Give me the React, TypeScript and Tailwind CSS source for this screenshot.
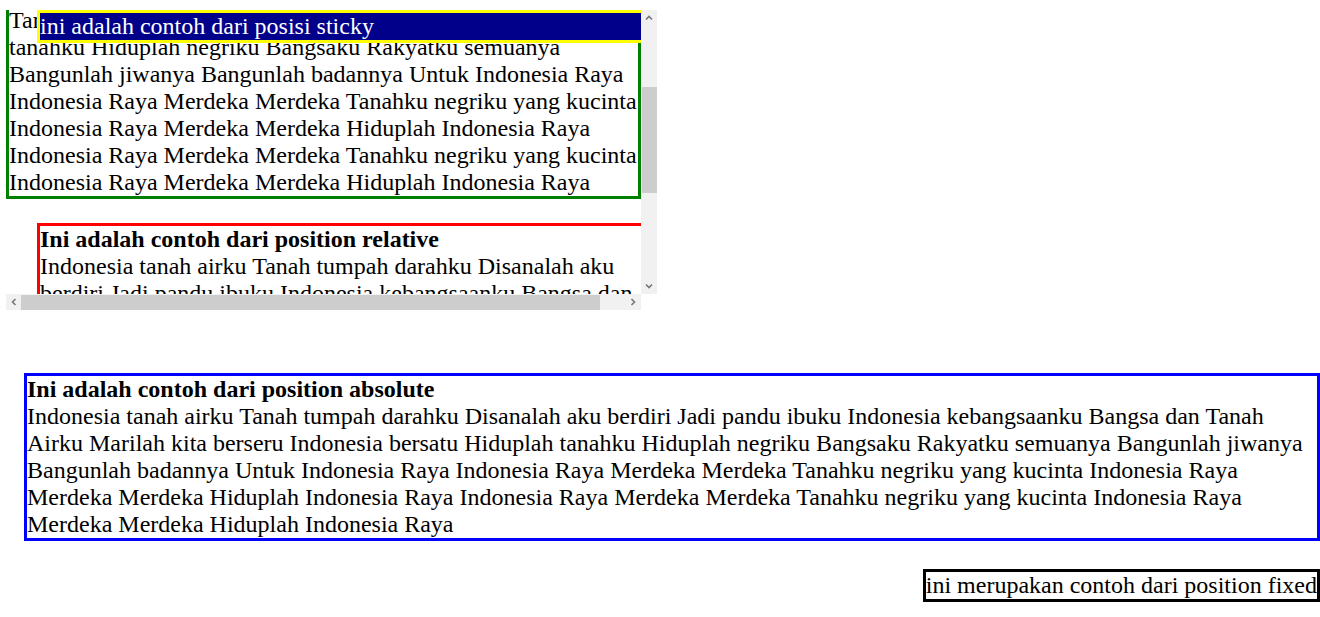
import { useLayoutEffect, useRef } from "react";

const LAGU =
  "Indonesia tanah airku Tanah tumpah darahku Disanalah aku berdiri Jadi pandu ibuku Indonesia kebangsaanku Bangsa dan Tanah Airku Marilah kita berseru Indonesia bersatu Hiduplah tanahku Hiduplah negriku Bangsaku Rakyatku semuanya Bangunlah jiwanya Bangunlah badannya Untuk Indonesia Raya Indonesia Raya Merdeka Merdeka Tanahku negriku yang kucinta Indonesia Raya Merdeka Merdeka Hiduplah Indonesia Raya Indonesia Raya Merdeka Merdeka Tanahku negriku yang kucinta Indonesia Raya Merdeka Merdeka Hiduplah Indonesia Raya";

const Arrow = ({ className }: { className: string }) => (
  <svg width="8" height="8" viewBox="0 0 8 8" className={className}>
    <polyline points="1,5.5 4,2.5 7,5.5" fill="none" stroke="#777" strokeWidth="1.6" />
  </svg>
);

export default function App() {
  const viewRef = useRef<HTMLDivElement>(null);

  // the box is shown already scrolled down a bit
  useLayoutEffect(() => {
    if (viewRef.current) {
      viewRef.current.scrollTop = 93;
      viewRef.current.scrollLeft = 0;
    }
  }, []);

  return (
    <div className="min-h-screen bg-white pt-[10px] font-['Liberation_Serif','Times_New_Roman',serif] text-[24px] leading-[27px] text-black">
      {/* scroll box with sticky + relative */}
      <div className="ml-[6px] grid h-[300px] w-[651px] grid-cols-[635px_16px] grid-rows-[284px_16px]">
        <div ref={viewRef} className="overflow-hidden">
          <div className="sticky top-0 z-10 ml-[31px] w-[635px] border-[3px] border-[#ffff00] bg-[#00008b] text-white">
            ini adalah contoh dari posisi sticky
          </div>
          <div className="border-[3px] border-[#008000]">{LAGU}</div>
          <div className="relative left-[31px] mt-[24px] w-[635px] border-[3px] border-[#ff0000]">
            <b>Ini adalah contoh dari position relative</b>
            <br />
            {LAGU}
          </div>
        </div>

        {/* vertical scrollbar */}
        <div className="flex flex-col bg-[#f1f1f1]">
          <div className="flex h-[16px] items-center justify-center">
            <Arrow className="" />
          </div>
          <div className="h-[61px]" />
          <div className="ml-[1px] h-[106px] bg-[#cdcdcd]" />
          <div className="flex-1" />
          <div className="flex h-[16px] items-center justify-center">
            <Arrow className="rotate-180" />
          </div>
        </div>

        {/* horizontal scrollbar */}
        <div className="flex bg-[#f1f1f1]">
          <div className="flex w-[15px] items-center justify-center">
            <Arrow className="-rotate-90" />
          </div>
          <div className="mt-[1px] w-[579px] bg-[#cdcdcd]" />
          <div className="flex-1" />
          <div className="flex w-[16px] items-center justify-center">
            <Arrow className="rotate-90" />
          </div>
        </div>
        <div className="bg-white" />
      </div>

      {/* absolute */}
      <div className="ml-[24px] mt-[63px] border-[3px] border-[#0000ff]">
        <b>Ini adalah contoh dari position absolute</b>
        <br />
        {LAGU}
      </div>

      {/* fixed */}
      <div className="mt-[28px] flex justify-end">
        <div className="border-[3px] border-black">ini merupakan contoh dari position fixed</div>
      </div>
    </div>
  );
}
